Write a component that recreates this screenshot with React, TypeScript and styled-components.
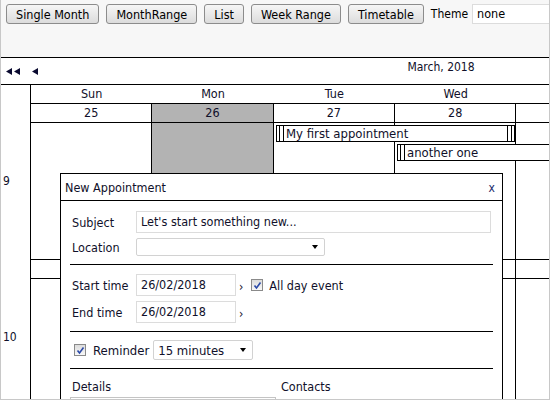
import styled, { createGlobalStyle } from "styled-components";

const GlobalStyle = createGlobalStyle`
  body {
    margin: 0;
    background: #fff;
    font-family: "DejaVu Sans Condensed", "DejaVu Sans", sans-serif;
    font-stretch: condensed;
    color: #10102a;
  }
  * { box-sizing: border-box; }
`;

const COLS = "30px repeat(7, 121.33px)";

const Frame = styled.div`
  position: relative;
  width: 550px;
  height: 400px;
  overflow: hidden;
  border: 1px solid #c8c8c8;
  border-top: none;
  background: #fff;
`;

const Toolbar = styled.div`
  height: 58px;
  padding: 4px 5px;
  background: #f7f7f7;
  border-bottom: 1px solid #000;
  display: flex;
  align-items: flex-start;
  gap: 7px;
  white-space: nowrap;
`;

const ToolButton = styled.button`
  height: 20px;
  padding: 0 9px;
  font: inherit;
  font-size: 12.5px;
  color: #000;
  background: linear-gradient(#f6f6f6, #dcdcdc);
  border: 1px solid #8c8c8c;
  border-radius: 3px;
`;

const ThemeLabel = styled.span`
  font-size: 12px;
  line-height: 20px;
  color: #000;
`;

const ThemeInput = styled.div`
  height: 20px;
  width: 200px;
  margin-left: -3px;
  padding: 0 4px;
  font-size: 12.5px;
  line-height: 18px;
  color: #000;
  background: #fff;
  border: 1px solid #dcdcdc;
  flex-shrink: 0;
`;

const Calendar = styled.div`
  width: 880px;
`;

const NavBar = styled.div`
  height: 27px;
  border-bottom: 1px solid #000;
  display: grid;
  grid-template-columns: 1fr auto 1fr;
  align-items: start;
`;

const Arrows = styled.div`
  padding: 10px 0 0 5px;
  display: flex;
`;

const MonthTitle = styled.div`
  padding-top: 2px;
  font-size: 12px;
  line-height: 15px;
`;

const HeadRow = styled.div`
  display: grid;
  grid-template-columns: ${COLS};
  height: 19px;
`;

const Corner = styled.div`
  border-right: 1px solid #000;
`;

const DayName = styled.div`
  border-bottom: 1px solid #000;
  text-align: center;
  font-size: 12.5px;
  line-height: 18px;
`;

const DateCell = styled.div<{ $today?: boolean }>`
  border-right: 1px solid #000;
  border-bottom: 1px solid #000;
  background: ${(p) => (p.$today ? "#b3b3b3" : "#fff")};
  text-align: center;
  font-size: 12.5px;
  line-height: 18px;
`;

const Body = styled.div`
  position: relative;
  display: grid;
  grid-template-columns: ${COLS};
  grid-template-rows: 137px 19px 200px;
`;

const TimeCell = styled.div`
  border-right: 1px solid #000;
  padding: 51px 0 0 2px;
  font-size: 12px;
  line-height: 15px;
`;

const SlotCell = styled.div<{ $today?: boolean }>`
  border-right: 1px solid #000;
  border-bottom: 1px solid #000;
  background: ${(p) => (p.$today ? "#b3b3b3" : "#fff")};
`;

const Appointment = styled.div`
  position: absolute;
  height: 17px;
  display: flex;
  align-items: stretch;
  background: #fff;
  border: 1px solid #000;
  font-size: 13px;
  line-height: 16px;
  white-space: nowrap;
`;

const Grip = styled.span`
  width: 5px;
  margin: 0 2px;
  border-left: 1px solid #000;
  border-right: 1px solid #000;
  flex-shrink: 0;
`;

const ApptText = styled.span`
  flex: 1;
  overflow: hidden;
`;

const Dialog = styled.div`
  position: absolute;
  left: 59px;
  top: 173px;
  width: 443px;
  height: 260px;
  background: #fff;
  border: 1px solid #000;
  font-size: 12.5px;
`;

const DialogHeader = styled.div`
  height: 27px;
  border-bottom: 1px solid #000;
  display: flex;
  align-items: center;
  justify-content: space-between;
  padding: 0 7px 0 4px;
`;

const CloseX = styled.span`
  font-size: 12px;
  color: #1a2a6a;
  padding-top: 2px;
`;

const DialogBody = styled.div`
  padding: 0 9px;
`;

const Section = styled.div<{ $top: number; $bottom: number }>`
  padding: ${(p) => p.$top}px 0 ${(p) => p.$bottom}px;
  border-bottom: 1px solid #000;
  display: flex;
  flex-direction: column;
  gap: 5px;
`;

const FieldRow = styled.div`
  display: flex;
  align-items: center;
`;

const Label = styled.span`
  width: 66px;
  padding-left: 2px;
  flex-shrink: 0;
`;

const TextBox = styled.div<{ $w: number }>`
  width: ${(p) => p.$w}px;
  height: 22px;
  padding: 0 4px;
  line-height: 20px;
  border: 1px solid #dcdcdc;
  white-space: nowrap;
  overflow: hidden;
`;

const Select = styled.div<{ $w: number; $h: number }>`
  width: ${(p) => p.$w}px;
  height: ${(p) => p.$h}px;
  padding: 0 6px 0 4px;
  border: 1px solid #d2d2d2;
  border-radius: 2px;
  display: flex;
  align-items: center;
  justify-content: space-between;
  font-size: 13px;
`;

const Chevron = styled.span`
  margin: 0 8px 0 3px;
  padding-top: 4px;
  font-size: 12px;
`;

const CheckLabel = styled.span`
  margin-left: 6px;
`;

const Box = styled.span`
  width: 12px;
  height: 12px;
  border: 1px solid #8a8a8a;
  background: linear-gradient(#dcdcdc, #f8f8f8);
  display: inline-flex;
  align-items: center;
  justify-content: center;
  flex-shrink: 0;
`;

const ReminderRow = styled.div`
  display: flex;
  align-items: center;
  padding-left: 4px;
  height: 20px;
`;

const ReminderText = styled.span`
  margin: 0 4px 0 7px;
  font-size: 13px;
`;

const DetailsGrid = styled.div`
  display: grid;
  grid-template-columns: 209px 1fr;
  padding-top: 10px;
`;

const SmallHeading = styled.div`
  padding-left: 2px;
  line-height: 16px;
`;

const TextArea = styled.div`
  margin-top: 2px;
  width: 206px;
  height: 60px;
  border: 1px solid #c4c4c4;
`;

function Triangle() {
  return (
    <svg width="6" height="4" viewBox="0 0 6 4">
      <path d="M0 0 H6 L3 4 Z" fill="#000" />
    </svg>
  );
}

function Check() {
  return (
    <Box>
      <svg width="9" height="9" viewBox="0 0 9 9">
        <path d="M1.5 4.5 L3.5 7 L7.5 1.5" fill="none" stroke="#2c4aa8" strokeWidth="1.6" />
      </svg>
    </Box>
  );
}

function NavArrows() {
  const arrow = "M0 3.5 L6 0 V7 Z";
  return (
    <svg width="33" height="7" viewBox="0 0 33 7">
      <path d={arrow} fill="#0a0a30" />
      <path d={arrow} transform="translate(8 0)" fill="#0a0a30" />
      <path d={arrow} transform="translate(26 0)" fill="#0a0a30" />
    </svg>
  );
}

const days = ["Sun", "Mon", "Tue", "Wed", "Thu", "Fri", "Sat"];
const dates = [25, 26, 27, 28, 1, 2, 3];
const TODAY = 1;

export default function App() {
  return (
    <>
      <GlobalStyle />
      <Frame>
        <Toolbar>
          <ToolButton>Single Month</ToolButton>
          <ToolButton>MonthRange</ToolButton>
          <ToolButton>List</ToolButton>
          <ToolButton>Week Range</ToolButton>
          <ToolButton>Timetable</ToolButton>
          <ThemeLabel>Theme</ThemeLabel>
          <ThemeInput>none</ThemeInput>
        </Toolbar>

        <Calendar>
          <NavBar>
            <Arrows>
              <NavArrows />
            </Arrows>
            <MonthTitle>March, 2018</MonthTitle>
            <div />
          </NavBar>

          <HeadRow>
            <Corner />
            {days.map((d, i) => (
              <DayName key={d}>{i < 4 ? d : ""}</DayName>
            ))}
          </HeadRow>

          <HeadRow>
            <Corner />
            {dates.map((d, i) => (
              <DateCell key={i} $today={i === TODAY}>
                {i < 4 ? d : ""}
              </DateCell>
            ))}
          </HeadRow>

          <Body>
            {[0, 1, 2].map((row) => [
              <TimeCell key={`t${row}`}>{row === 0 ? "9" : row === 2 ? "10" : ""}</TimeCell>,
              ...days.map((d, i) => <SlotCell key={`${row}-${d}`} $today={i === TODAY} />),
            ])}

            <Appointment style={{ left: 275, top: 2, width: 239 }}>
              <Grip />
              <ApptText>My first appointment</ApptText>
              <Grip />
            </Appointment>
            <Appointment style={{ left: 396, top: 21, width: 242 }}>
              <Grip />
              <ApptText>another one</ApptText>
              <Grip />
            </Appointment>
          </Body>
        </Calendar>

        <Dialog>
          <DialogHeader>
            <span>New Appointment</span>
            <CloseX>x</CloseX>
          </DialogHeader>
          <DialogBody>
            <Section $top={10} $bottom={8}>
              <FieldRow>
                <Label>Subject</Label>
                <TextBox $w={355}>Let's start something new...</TextBox>
              </FieldRow>
              <FieldRow>
                <Label>Location</Label>
                <Select $w={189} $h={18}>
                  <span />
                  <Triangle />
                </Select>
              </FieldRow>
            </Section>

            <Section $top={9} $bottom={8}>
              <FieldRow>
                <Label>Start time</Label>
                <TextBox $w={100}>26/02/2018</TextBox>
                <Chevron>›</Chevron>
                <Check />
                <CheckLabel>All day event</CheckLabel>
              </FieldRow>
              <FieldRow>
                <Label>End time</Label>
                <TextBox $w={100}>26/02/2018</TextBox>
                <Chevron>›</Chevron>
              </FieldRow>
            </Section>

            <Section $top={8} $bottom={8}>
              <ReminderRow>
                <Check />
                <ReminderText>Reminder</ReminderText>
                <Select $w={100} $h={20}>
                  <span>15 minutes</span>
                  <Triangle />
                </Select>
              </ReminderRow>
            </Section>

            <DetailsGrid>
              <div>
                <SmallHeading>Details</SmallHeading>
                <TextArea />
              </div>
              <SmallHeading>Contacts</SmallHeading>
            </DetailsGrid>
          </DialogBody>
        </Dialog>
      </Frame>
    </>
  );
}
